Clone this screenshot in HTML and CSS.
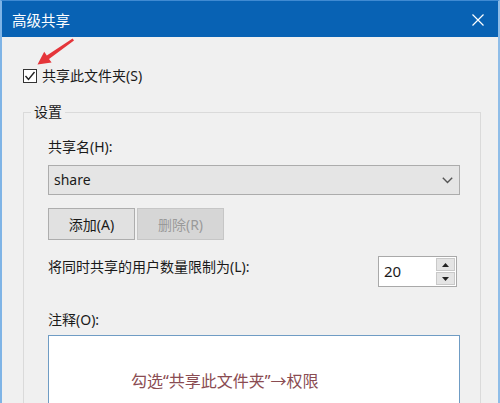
FILE: index.html
```html
<!DOCTYPE html>
<html lang="zh-CN">
<head>
  <meta charset="UTF-8">
  <title>高级共享</title>
  <link rel="stylesheet" href="styles.css">
</head>
<body>
  <div class="window">
    <div class="titlebar">
      <span class="title">高级共享</span>
      <svg class="close" width="12" height="12" viewBox="0 0 12 12">
        <path d="M0.5 0.5 L11.5 11.5 M11.5 0.5 L0.5 11.5" stroke="#ffffff" stroke-width="1.2" fill="none"/>
      </svg>
    </div>

    <div class="content">
      <!-- red annotation arrow -->
      <svg class="arrow" width="100" height="80" viewBox="0 0 100 80">
        <polygon points="74,40.6 49,58.9 51.6,62.6 37.5,64.5 44.2,51.8 46.8,55.5 72.6,38.6" fill="#e5353a"/>
      </svg>

      <label class="check-row">
        <svg class="checkbox" width="14" height="14" viewBox="0 0 14 14">
          <rect x="0.5" y="0.5" width="13" height="13" fill="#ffffff" stroke="#333333"/>
          <polyline points="2.5,7 5.5,10.5 11.5,3" fill="none" stroke="#222222" stroke-width="1.4"/>
        </svg>
        <span>共享此文件夹(S)</span>
      </label>

      <fieldset class="group">
        <legend>设置</legend>
        <div class="group-body">
          <div class="label">共享名(H):</div>
          <div class="select">
            <span>share</span>
            <svg width="11" height="7" viewBox="0 0 11 7">
              <polyline points="0.8,0.8 5.5,5.5 10.2,0.8" fill="none" stroke="#555555" stroke-width="1.4"/>
            </svg>
          </div>

          <div class="buttons">
            <div class="btn">添加(A)</div>
            <div class="btn disabled">删除(R)</div>
          </div>

          <div class="limit-row">
            <div class="label">将同时共享的用户数量限制为(L):</div>
            <div class="spin">
              <span class="spin-value">20</span>
              <div class="spin-btns">
                <div class="spin-btn">
                  <svg width="7" height="4" viewBox="0 0 7 4"><polygon points="0,4 3.5,0 7,4" fill="#222"/></svg>
                </div>
                <div class="spin-btn">
                  <svg width="7" height="4" viewBox="0 0 7 4"><polygon points="0,0 3.5,4 7,0" fill="#222"/></svg>
                </div>
              </div>
            </div>
          </div>

          <div class="label note-label">注释(O):</div>
          <div class="note">
            <span class="note-text">勾选“共享此文件夹”→权限</span>
          </div>
        </div>
      </fieldset>
    </div>
  </div>
</body>
</html>
```

FILE: styles.css
```css
html, body { margin: 0; padding: 0; }
body { font-family: "Noto Sans", "Noto Sans CJK SC", sans-serif; font-size: 14px; color: #1a1a1a; background: #f0f0f0; }

.window { width: 500px; height: 403px; box-sizing: border-box; overflow: hidden; background: #f0f0f0; border-left: 2px solid #7fb4e6; border-right: 2px solid #8fbde8; border-top: 1px solid #3f8ad2; }
.titlebar { height: 36px; background: #0862b4; display: flex; align-items: center; justify-content: space-between; padding: 0 10px 0 10px; color: #ffffff; }
.title { font-size: 14.5px; line-height: 20px; margin-top: 2px; }
.close { margin-right: 4px; margin-top: 1px; }

.content { position: relative; padding: 29px 0 0 21px; }
.arrow { position: absolute; left: -2px; top: -37px; }

.check-row { display: flex; align-items: center; gap: 5px; height: 20px; line-height: 20px; }
.checkbox { display: block; }

.group { margin: 16px 0 0 0; width: 458px; height: 330px; box-sizing: border-box; border: 1px solid #dadada; padding: 0; }
.group legend { margin-left: 7px; padding: 0 3px; line-height: 20px; }
.group-body { padding: 15px 20px 0 24px; }

.label { line-height: 20px; }

.select { margin-top: 8px; height: 30px; box-sizing: border-box; border: 1px solid #acacac; background: #e5e5e5; display: flex; align-items: center; justify-content: space-between; padding: 0 6px 0 5px; }
.select span { line-height: 20px; }

.buttons { display: flex; gap: 2px; margin-top: 13px; }
.btn { width: 87px; height: 32px; box-sizing: border-box; border: 1px solid #adadad; background: #e1e1e1; display: flex; align-items: center; justify-content: center; }
.btn.disabled { border-color: #c6c6c6; background: #d6d6d6; color: #9a9a9a; }

.limit-row { display: flex; justify-content: space-between; align-items: flex-start; margin-top: 16px; padding-right: 3px; }
.limit-row .label { margin-top: 1px; }
.spin { width: 79px; height: 31px; box-sizing: border-box; border: 1px solid #a9a9a9; background: #ffffff; display: flex; justify-content: space-between; }
.spin-value { line-height: 29px; padding-left: 5px; font-size: 15px; }
.spin-btns { display: flex; flex-direction: column; gap: 1px; padding: 1px; width: 19px; }
.spin-btn { flex: 1; background: #e4e4e4; border: 1px solid #c9c9c9; display: flex; align-items: center; justify-content: center; }

.note-label { margin-top: 23px; }
.note { margin-top: 5px; height: 120px; box-sizing: border-box; border: 1px solid #6f9cc4; background: #ffffff; padding: 35px 0 0 82px; }
.note-text { color: #8a4c52; font-size: 16px; line-height: 20px; }
```
